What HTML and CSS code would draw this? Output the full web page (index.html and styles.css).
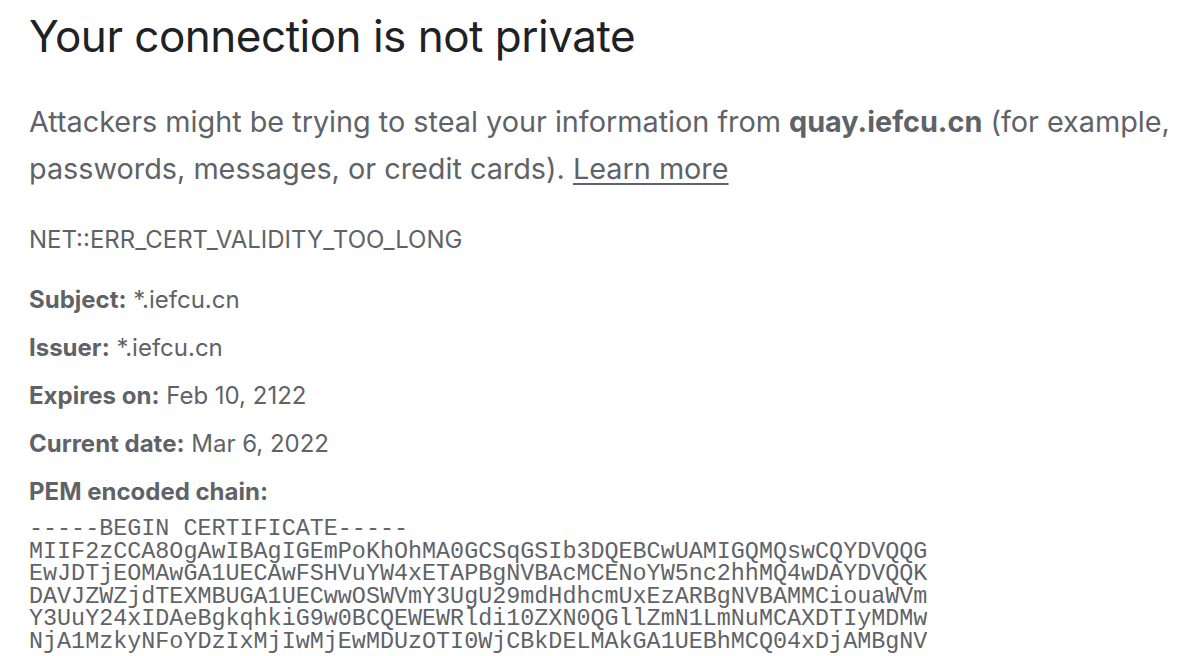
FILE: index.html
```html
<!DOCTYPE html>
<html>
<head>
<meta charset="utf-8">
<link rel="stylesheet" href="styles.css">
</head>
<body>
<div class="main">
  <h1 class="title">Your connection is not private</h1>
  <p class="message"><span class="line">Attackers might be trying to steal your information from <strong>quay.iefcu.cn</strong> (for example,</span><br>passwords, messages, or credit cards). <a class="learn" href="#">Learn more</a></p>
  <div class="error-code">NET::ERR_CERT_VALIDITY_TOO_LONG</div>
  <div class="debug">
    <p class="row"><span class="label">Subject:</span> *.iefcu.cn</p>
    <p class="row"><span class="label">Issuer:</span> *.iefcu.cn</p>
    <p class="row"><span class="label">Expires on:</span> Feb 10, 2122</p>
    <p class="row"><span class="label">Current date:</span> Mar 6, 2022</p>
    <p class="row"><span class="label">PEM encoded chain:</span></p>
<pre class="pem">-----BEGIN CERTIFICATE-----
MIIF2zCCA8OgAwIBAgIGEmPoKhOhMA0GCSqGSIb3DQEBCwUAMIGQMQswCQYDVQQG
EwJDTjEOMAwGA1UECAwFSHVuYW4xETAPBgNVBAcMCENoYW5nc2hhMQ4wDAYDVQQK
DAVJZWZjdTEXMBUGA1UECwwOSWVmY3UgU29mdHdhcmUxEzARBgNVBAMMCiouaWVm
Y3UuY24xIDAeBgkqhkiG9w0BCQEWEWRldi10ZXN0QGllZmN1LmNuMCAXDTIyMDMw
NjA1MzkyNFoYDzIxMjIwMjEwMDUzOTI0WjCBkDELMAkGA1UEBhMCQ04xDjAMBgNV</pre>
  </div>
</div>
</body>
</html>
```

FILE: styles.css
```css
html, body {
  margin: 0;
  padding: 0;
  background: #ffffff;
  overflow: hidden;
}
body {
  font-family: Inter, "Noto Sans", sans-serif;
  color: #5f6368;
}
.main {
  padding: 6px 0 0 29px;
}
.title {
  margin: 0;
  font-size: 44px;
  font-weight: 400;
  line-height: 60px;
  color: #202124;
  letter-spacing: -0.5px;
}
.message {
  margin: 32px 0 0 0;
  font-size: 28.8px;
  line-height: 47px;
  color: #5f6368;
}
.line {
  white-space: nowrap;
}
.message strong {
  font-weight: 700;
}
.learn {
  color: #5f6368;
  text-decoration: underline;
  text-underline-offset: 4px;
}
.error-code {
  margin-top: 33px;
  font-size: 24px;
  line-height: 30px;
}
.debug {
  margin-top: 30px;
}
.row {
  margin: 0 0 18px 0;
  font-size: 24px;
  line-height: 30px;
}
.label {
  font-weight: 700;
}
.pem {
  margin: -7px 0 0 0;
  font-family: "Liberation Mono", monospace;
  font-size: 23.4px;
  line-height: 22.6px;
  color: #5f6368;
}
```
